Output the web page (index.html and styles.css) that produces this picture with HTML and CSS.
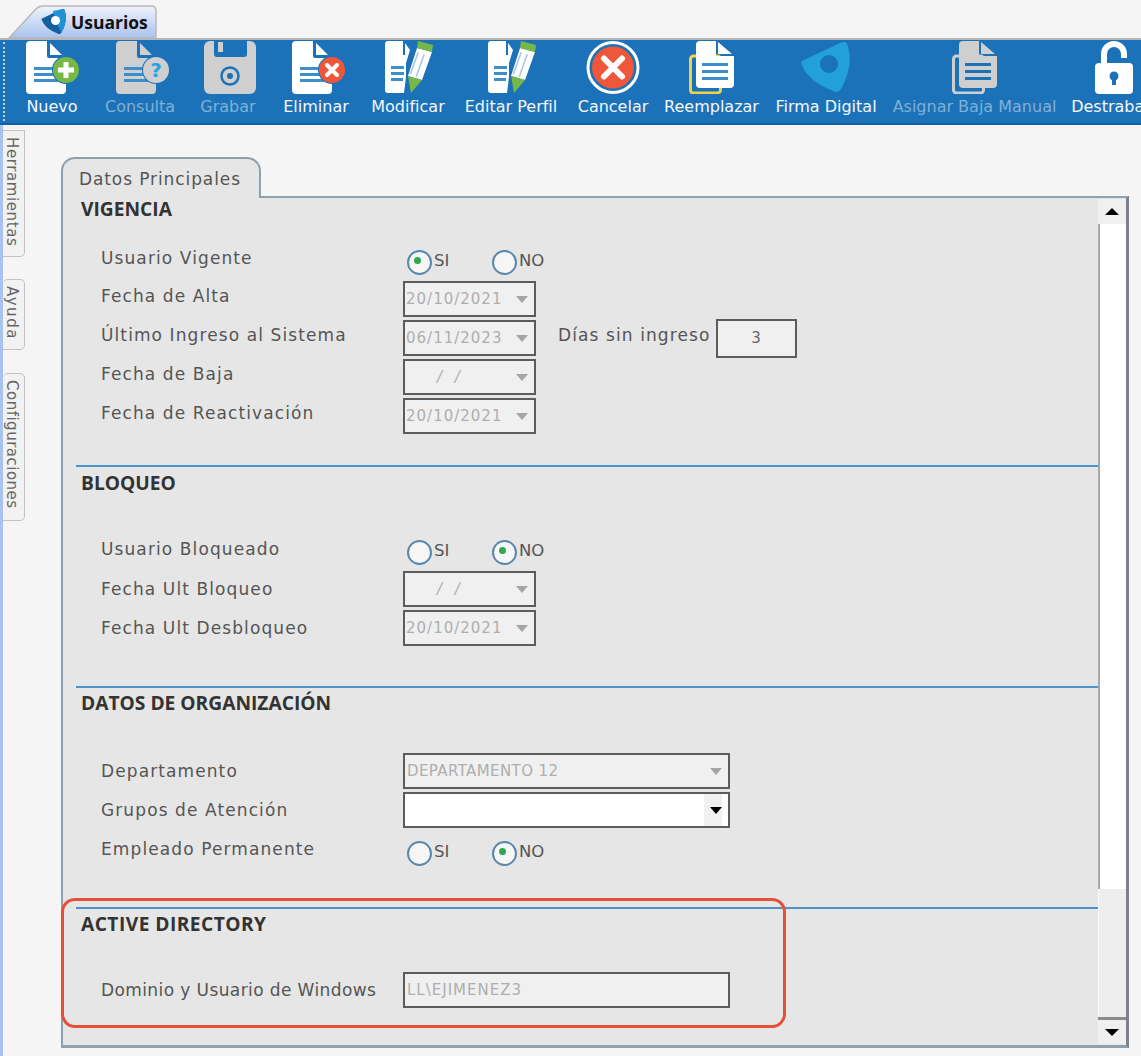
FILE: index.html
```html
<!DOCTYPE html>
<html lang="es">
<head>
<meta charset="utf-8">
<title>Usuarios</title>
<link rel="stylesheet" href="styles.css">
</head>
<body>
<svg class="defs" width="0" height="0" aria-hidden="true">
  <defs>
    <symbol id="page" viewBox="0 0 40 53">
      <path fill="currentColor" d="M4 0H21V15a2 2 0 0 0 2 2H40V49a4 4 0 0 1-4 4H4a4 4 0 0 1-4-4V4a4 4 0 0 1 4-4z"/>
      <path fill="currentColor" d="M24 2L36 14H24z"/>
      <path fill="#3d8fcb" d="M8 26h24v3H8zM8 32h24v3H8zM8 38h24v3H8z"/>
    </symbol>
    <symbol id="editpage" viewBox="0 0 48 52">
      <path fill="#fff" d="M3 0H18V14H21V36L19 52H3a3 3 0 0 1-3-3V3a3 3 0 0 1 3-3z"/>
      <path fill="#3d8fcb" d="M6 25h13v3H6zM6 31h13v3H6zM6 37h12v3H6z"/>
      <path fill="#fff" d="M20 2L25 9L21 22H20z"/>
      <path fill="#fff" d="M32 7L47 11L37 39L23 35z"/>
      <path fill="#a9c8e0" d="M32.500 11l1.500.5-8 22-1.500-.5zM38.500 13l1.500.5-8 22.500-1.500-.5z"/>
      <path fill="#76b845" d="M33 0L48 4L47 11L32 7zM23 35L37 39L26 52z"/>
    </symbol>
    <symbol id="logo" viewBox="0 0 52 52">
      <path d="M2 20L40 2Q47-1 48 6Q54 24 41 48Q38 53 33 50Q8 40 2 24Q0 21 2 20Z"/>
    </symbol>
  </defs>
</svg>

<div class="tabstrip">
  <div class="apptab">
    <svg class="apptab-shape" width="150" height="34" viewBox="0 0 150 34">
      <defs>
        <linearGradient id="tabfill" x1="0" y1="0" x2="0" y2="1">
          <stop offset="0" stop-color="#f0f3fb"/>
          <stop offset="1" stop-color="#a9c2ee"/>
        </linearGradient>
      </defs>
      <path d="M1 34L28 5Q31 2 35 2H143Q148 2 148 7V34Z" fill="url(#tabfill)" stroke="#b9b9b9" stroke-width="1.5"/>
    </svg>
    <svg class="apptab-logo" width="26" height="27" viewBox="0 0 52 52">
      <use href="#logo" fill="#145f9c"/>
      <path d="M24 5L40 2Q47-1 48 6Q54 24 41 48Q30 30 24 5Z" fill="#1e93d6"/>
      <circle cx="29" cy="24" r="9" fill="#fff"/>
    </svg>
    <span class="apptab-label">Usuarios</span>
  </div>
</div>

<div class="toolbar">
  <div class="tool tool-nuevo">
    <svg class="tool-icon" width="54" height="53" viewBox="0 0 54 53">
      <use href="#page" width="40" height="53" color="#fff"/>
      <circle cx="40" cy="29" r="14" fill="#1b72b8"/>
      <circle cx="40" cy="29" r="13" fill="#76b845"/>
      <path d="M37.500 21h5v5.500h5.500v5h-5.500v5.500h-5v-5.500h-5.500v-5h5.500z" fill="#fff"/>
    </svg>
    <span>Nuevo</span>
  </div>
  <div class="tool tool-off tool-consulta">
    <svg class="tool-icon" width="54" height="53" viewBox="0 0 54 53">
      <use href="#page" width="40" height="53" color="#cfcfcf"/>
      <circle cx="40" cy="29" r="14" fill="#1b72b8"/>
      <circle cx="40" cy="29" r="13" fill="#cfcfcf"/>
      <text class="qmark" x="40" y="36" text-anchor="middle">?</text>
    </svg>
    <span>Consulta</span>
  </div>
  <div class="tool tool-off tool-grabar">
    <svg class="tool-icon" width="52" height="53" viewBox="0 0 52 53">
      <path fill="#cfcfcf" d="M6 0H46a6 6 0 0 1 6 6V47a6 6 0 0 1-6 6H6a6 6 0 0 1-6-6V6a6 6 0 0 1 6-6z"/>
      <path fill="#1b72b8" d="M10 0H43V13a3 3 0 0 1-3 3H13a3 3 0 0 1-3-3z"/>
      <rect x="14" y="1" width="5" height="10" fill="#cfcfcf"/>
      <circle cx="26" cy="35" r="8.500" fill="none" stroke="#1b72b8" stroke-width="2.500"/>
      <circle cx="26" cy="35" r="3" fill="#1b72b8"/>
    </svg>
    <span>Grabar</span>
  </div>
  <div class="tool tool-eliminar">
    <svg class="tool-icon" width="54" height="53" viewBox="0 0 54 53">
      <use href="#page" width="40" height="53" color="#fff"/>
      <circle cx="40" cy="29" r="14" fill="#1b72b8"/>
      <circle cx="40" cy="29" r="13" fill="#f0573a"/>
      <path d="M35 24l10 10M45 24l-10 10" stroke="#fff" stroke-width="4" stroke-linecap="round"/>
    </svg>
    <span>Eliminar</span>
  </div>
  <div class="tool tool-modificar">
    <svg class="tool-icon" width="48" height="53" viewBox="0 0 48 53">
      <use href="#editpage" width="48" height="52"/>
    </svg>
    <span>Modificar</span>
  </div>
  <div class="tool tool-editar">
    <svg class="tool-icon" width="48" height="53" viewBox="0 0 48 53">
      <use href="#editpage" width="48" height="52"/>
    </svg>
    <span>Editar Perfil</span>
  </div>
  <div class="tool tool-cancelar">
    <svg class="tool-icon" width="54" height="53" viewBox="0 0 54 53">
      <circle cx="27" cy="26.500" r="25" fill="#1b72b8" stroke="#fff" stroke-width="3"/>
      <circle cx="27" cy="26.500" r="21" fill="#f0573a"/>
      <path d="M18 17.500l18 18M36 17.500l-18 18" stroke="#fff" stroke-width="6" stroke-linecap="round"/>
    </svg>
    <span>Cancelar</span>
  </div>
  <div class="tool tool-reemplazar">
    <svg class="tool-icon" width="46" height="53" viewBox="0 0 46 53">
      <rect x="1.500" y="15" width="30" height="37" rx="3" fill="none" stroke="#f0d24a" stroke-width="3"/>
      <path fill="#fff" d="M11 0H27V15H45V43a4 4 0 0 1-4 4H11a4 4 0 0 1-4-4V4a4 4 0 0 1 4-4z"/>
      <path fill="#fff" d="M29 1L43 13H29z"/>
      <path fill="#3d8fcb" d="M13 22h26v3H13zM13 29h26v3H13zM13 36h26v3H13z"/>
    </svg>
    <span>Reemplazar</span>
  </div>
  <div class="tool tool-firma">
    <svg class="tool-icon" width="52" height="53" viewBox="0 0 52 53">
      <use href="#logo" width="52" height="52" fill="#22a0dc"/>
      <circle cx="29" cy="23" r="9" fill="#1b72b8"/>
    </svg>
    <span>Firma Digital</span>
  </div>
  <div class="tool tool-off tool-asignar">
    <svg class="tool-icon" width="46" height="53" viewBox="0 0 46 53">
      <rect x="1.500" y="15" width="30" height="37" rx="3" fill="none" stroke="#cfcfcf" stroke-width="3"/>
      <path fill="#cfcfcf" d="M11 0H27V15H45V43a4 4 0 0 1-4 4H11a4 4 0 0 1-4-4V4a4 4 0 0 1 4-4z"/>
      <path fill="#cfcfcf" d="M29 1L43 13H29z"/>
      <path fill="#1b72b8" d="M13 22h26v3H13zM13 29h26v3H13zM13 36h26v3H13z"/>
    </svg>
    <span>Asignar Baja Manual</span>
  </div>
  <div class="tool tool-destrabar">
    <svg class="tool-icon" width="38" height="53" viewBox="0 0 38 53">
      <path d="M9 24V13a10 10 0 0 1 20 0V17" fill="none" stroke="#fff" stroke-width="6"/>
      <rect y="22" width="38" height="31" rx="4" fill="#fff"/>
      <circle cx="19" cy="35" r="4.500" fill="#1b72b8"/>
      <rect x="17" y="36" width="4" height="8" fill="#1b72b8"/>
    </svg>
    <span>Destrabar</span>
  </div>
</div>

<div class="workspace">
  <div class="sidetabs">
    <div class="sidetab sidetab-h">Herramientas</div>
    <div class="sidetab sidetab-a">Ayuda</div>
    <div class="sidetab sidetab-c">Configuraciones</div>
  </div>

  <div class="editor">
    <div class="paneltab">Datos Principales</div>
    <div class="panel">
      <div class="sections">
        <section class="section section-vigencia">
          <h2 class="section-title">VIGENCIA</h2>
          <div class="radiorow">
            <span class="label">Usuario Vigente</span>
            <span class="radio radio-on">SI</span>
            <span class="radio">NO</span>
          </div>
          <div class="row"><span class="label">Fecha de Alta</span><div class="field field-date"><span>20/10/2021</span><i class="arrow"></i></div></div>
          <div class="row">
            <span class="label">Último Ingreso al Sistema</span>
            <div class="field field-date"><span>06/11/2023</span><i class="arrow"></i></div>
            <span class="dias-label">Días sin ingreso</span>
            <div class="field field-num">3</div>
          </div>
          <div class="row"><span class="label">Fecha de Baja</span><div class="field field-date field-empty"><span>/ /</span><i class="arrow"></i></div></div>
          <div class="row"><span class="label">Fecha de Reactivación</span><div class="field field-date"><span>20/10/2021</span><i class="arrow"></i></div></div>
        </section>

        <section class="section section-bloqueo">
          <h2 class="section-title">BLOQUEO</h2>
          <div class="radiorow">
            <span class="label">Usuario Bloqueado</span>
            <span class="radio">SI</span>
            <span class="radio radio-on">NO</span>
          </div>
          <div class="row"><span class="label">Fecha Ult Bloqueo</span><div class="field field-date field-empty"><span>/ /</span><i class="arrow"></i></div></div>
          <div class="row"><span class="label">Fecha Ult Desbloqueo</span><div class="field field-date"><span>20/10/2021</span><i class="arrow"></i></div></div>
        </section>

        <section class="section section-org">
          <h2 class="section-title">DATOS DE ORGANIZACIÓN</h2>
          <div class="row row-first"><span class="label">Departamento</span><div class="field field-wide"><span>DEPARTAMENTO 12</span><i class="arrow"></i></div></div>
          <div class="row"><span class="label">Grupos de Atención</span><div class="field field-wide field-live"><span></span><i class="arrow"></i></div></div>
          <div class="radiorow radiorow-last">
            <span class="label">Empleado Permanente</span>
            <span class="radio">SI</span>
            <span class="radio radio-on">NO</span>
          </div>
        </section>

        <section class="section section-ad">
          <h2 class="section-title">ACTIVE DIRECTORY</h2>
          <div class="row row-first"><span class="label label-tight">Dominio y Usuario de Windows</span><div class="field field-wide field-ad"><span>LL\EJIMENEZ3</span></div></div>
        </section>
      </div>

      <div class="scrollbar">
        <div class="scroll-btn"><i class="tri tri-up"></i></div>
        <div class="scroll-track"></div>
        <div class="scroll-thumb"></div>
        <div class="scroll-btn scroll-btn-down"><i class="tri tri-down"></i></div>
      </div>
    </div>
    <div class="highlight"></div>
  </div>

  <div class="sidepanel"><div class="sidepanel-rule"></div></div>
</div>
</body>
</html>
```

FILE: styles.css
```css
* { box-sizing: border-box; }
html, body { margin: 0; padding: 0; }
body {
  width: 1141px;
  height: 1056px;
  overflow: hidden;
  background: #f5f5f5;
  font-family: "DejaVu Sans", sans-serif;
  color: #4a4a4a;
}
.defs { position: absolute; }

/* top tab */
.tabstrip { height: 38px; padding: 4px 0 0 8px; }
.apptab {
  position: relative;
  width: 150px;
  height: 34px;
  display: flex;
  align-items: center;
  padding-left: 33px;
  gap: 4px;
}
.apptab-shape { position: absolute; left: 0; top: 0; }
.apptab-logo { position: relative; flex: none; }
.apptab-label { position: relative; top: 1px; font-size: 17.500px; font-weight: 700; color: #111; font-family: "Open Sans", sans-serif; }

/* toolbar */
.toolbar {
  height: 87px;
  background: #1b72b8;
  border-top: 2px solid #b5b5b5;
  border-bottom: 2px solid #135f9f;
  display: flex;
  overflow: hidden;
  padding: 1px 0 0 26px;
  position: relative;
}
.toolbar::before {
  content: "";
  position: absolute;
  left: 3px; top: 2px; bottom: 2px;
  border-left: 2px dotted #bcd2e6;
}
.tool {
  flex: none;
  display: flex;
  flex-direction: column;
  align-items: center;
  color: #f4f8fb;
  font-size: 16px;
  line-height: 20px;
  white-space: nowrap;
}
.tool-icon { display: block; margin-bottom: 3px; flex: none; }
.tool-off { color: #7fb0d6; }
.qmark { font: 700 20px "DejaVu Sans", sans-serif; fill: #2ba3e0; }
.tool-nuevo { width: 52px; margin-right: 27px; }
.tool-nuevo .tool-icon { margin-left: 2px; }
.tool-consulta { width: 70px; margin-right: 25px; }
.tool-consulta .tool-icon { margin-left: 6px; }
.tool-grabar { width: 56px; margin-right: 28px; }
.tool-grabar .tool-icon { margin-left: 4px; }
.tool-eliminar { width: 64px; margin-right: 22px; }
.tool-eliminar .tool-icon { margin-left: 6px; }
.tool-modificar { width: 76px; margin-right: 16px; }
.tool-modificar .tool-icon { margin-left: 2px; }
.tool-editar { width: 98px; margin-right: 17px; }
.tool-editar .tool-icon { margin-left: 2px; }
.tool-cancelar { width: 72px; margin-right: 16px; }
.tool-reemplazar { width: 93px; margin-right: 16px; }
.tool-firma { width: 104px; margin-right: 15px; }
.tool-asignar { width: 163px; margin-right: 15px; }
.tool-destrabar { width: 80px; }
.tool-destrabar .tool-icon { margin-left: 6px; }

/* workspace */
.workspace { display: flex; height: 931px; }
.sidetabs {
  flex: none;
  width: 26px;
  padding-top: 5px;
  border-left: 3px solid #a9c2ee;
  display: flex;
  flex-direction: column;
  align-items: flex-start;
}
.sidetab {
  writing-mode: vertical-rl;
  width: 22px;
  border: 1px solid #c2c2c2;
  border-left: 0;
  border-radius: 0 0 5px 0;
  background: #f2f2f2;
  color: #666;
  font-size: 15px;
  line-height: 18px;
  padding-top: 6px;
  padding-right: 3px;
  letter-spacing: 0.6px;
  white-space: nowrap;
}
.sidetab-h { height: 127px; }
.sidetab-a { height: 71px; margin-top: 22px; border-radius: 5px 5px 5px 0; letter-spacing: 1.500px; }
.sidetab-c { height: 148px; margin-top: 23px; border-radius: 5px 5px 5px 0; letter-spacing: 0.5px; }

.editor { position: relative; flex: none; width: 1103px; margin-left: 35px; padding-top: 32px; }
.paneltab {
  position: relative;
  z-index: 1;
  width: 200px;
  height: 41px;
  margin-bottom: -2px;
  background: #e6e6e6;
  border: 2px solid #8fa1ad;
  border-bottom: 0;
  border-radius: 14px 14px 0 0;
  padding: 8px 0 0 16px;
  font-size: 17px;
  line-height: 24px;
  color: #555;
  letter-spacing: 0.9px;
  white-space: nowrap;
}
.panel {
  width: 1068px;
  height: 852px;
  background: #e6e6e6;
  border: 2px solid #8fa1ad;
  border-right: 3px solid #7c8287;
  border-bottom-width: 3px;
  display: flex;
  padding-left: 13px;
  padding-bottom: 1px;
}
.sections { flex: 1; min-width: 0; }
.section { border-top: 2px solid #4c93cc; }
.section-vigencia { border-top: 0; height: 267px; }
.section-bloqueo { height: 221px; }
.section-org { height: 221px; }
.section-title {
  margin: 0;
  padding-left: 5px;
  height: 32px;
  line-height: 32px;
  font-size: 19.200px;
  font-weight: 700;
  color: #333;
  font-family: "Open Sans", sans-serif;
}
.section-vigencia .section-title { height: 22px; line-height: 22px; }
.section-org .section-title, .section-ad .section-title { line-height: 30px; }
.section-ad .section-title { letter-spacing: 0.45px; }
.label {
  flex: none;
  width: 327px;
  padding-left: 25px;
  font-size: 17px;
  letter-spacing: 1.100px;
  color: #555;
  white-space: nowrap;
}
.label-tight { letter-spacing: 0.4px; }
.row { display: flex; align-items: center; height: 36px; margin-bottom: 3px; }
.section-vigencia .row > .label { padding-bottom: 7px; }
.row-first { margin-top: 33px; }
.section-ad .row-first { margin-top: 31px; }
.radiorow { display: flex; align-items: center; height: 22px; margin-bottom: 10px; }
.section-vigencia .radiorow { margin-top: 29px; }
.section-bloqueo .radiorow { margin-top: 40px; margin-bottom: 10px; }
.section-bloqueo .radiorow > .label { padding-bottom: 2px; }
.radiorow-last { margin-top: 12px; margin-bottom: 0; }
.radiorow > .label { padding-bottom: 4px; }
.radio {
  position: relative;
  width: 85px;
  padding-left: 31px;
  font-size: 16.500px;
  color: #555;
}
.radio::before {
  content: "";
  position: absolute;
  left: 4px; top: 50%;
  width: 21px; height: 21px;
  margin-top: -10px;
  border: 2px solid #5a87ad;
  border-radius: 50%;
  background: #f6f6f6;
}
.radio-on::after {
  content: "";
  position: absolute;
  left: 11px; top: 50%;
  width: 7px; height: 7px;
  margin-top: -3px;
  border-radius: 50%;
  background: #2fa84f;
}
.field {
  flex: none;
  display: flex;
  align-items: center;
  justify-content: space-between;
  height: 36px;
  border: 2px solid #5c5c5c;
  background: #f0f0f0;
  color: #aeaeae;
  font-size: 15px;
  padding: 0 6px 0 1px;
  letter-spacing: 1px;
  white-space: nowrap;
}
.field-date { width: 133px; }
.field-empty span { margin-left: 31px; letter-spacing: 4px; font-style: italic; }
.field-wide { width: 327px; }
.field-wide span { margin-left: 1px; font-size: 15px; letter-spacing: 0.4px; }
.field-ad span { letter-spacing: 1px; }
.field-live { background: linear-gradient(to left, #fff 6px, #f0f0f0 6px, #f0f0f0 24px, #fff 24px); }
.field-live .arrow { border-top-color: #000; }
.field-num { width: 81px; height: 39px; justify-content: center; padding: 0; color: #666; }
.arrow {
  width: 0; height: 0;
  border-left: 6px solid transparent;
  border-right: 6px solid transparent;
  border-top: 7px solid #a5a5a5;
}
.dias-label {
  flex: none;
  margin-left: 22px;
  width: 158px;
  padding-bottom: 7px;
  font-size: 17px;
  letter-spacing: 1.100px;
  color: #555;
  white-space: nowrap;
}

/* scrollbar */
.scrollbar { flex: none; width: 28px; display: flex; flex-direction: column; padding-top: 1px; }
.scroll-btn {
  flex: none;
  height: 25px;
  background: #f0f0f0;
  display: flex;
  align-items: center;
  justify-content: center;
}
.scroll-btn-down { height: 27px; border-top: 3px solid #8a8a8a; }
.scroll-track { flex: none; height: 665px; background: #fff; border-left: 2px solid #a8a8a8; }
.scroll-thumb { flex: 1; background: #eeeeee; border-left: 1px solid #fafafa; }
.tri { width: 0; height: 0; border-left: 7px solid transparent; border-right: 7px solid transparent; }
.tri-up { border-bottom: 7px solid #000; }
.tri-down { border-top: 7px solid #000; }

.highlight {
  position: absolute;
  left: 0; top: 773px;
  width: 725px;
  height: 130px;
  border: 3.500px solid #e64f38;
  border-radius: 14px;
  pointer-events: none;
}

.sidepanel {
  flex: none;
  width: 7px;
  margin-left: -1px;
  margin-top: 35px;
  height: 888px;
  background: #ececec;
  border: 2px solid #a9b4bc;
  border-right: 0;
  border-bottom-width: 1px;
  border-radius: 12px 0 0 0;
  padding-top: 490px;
}
.sidepanel-rule { height: 2px; background: #4c93cc; }
```
